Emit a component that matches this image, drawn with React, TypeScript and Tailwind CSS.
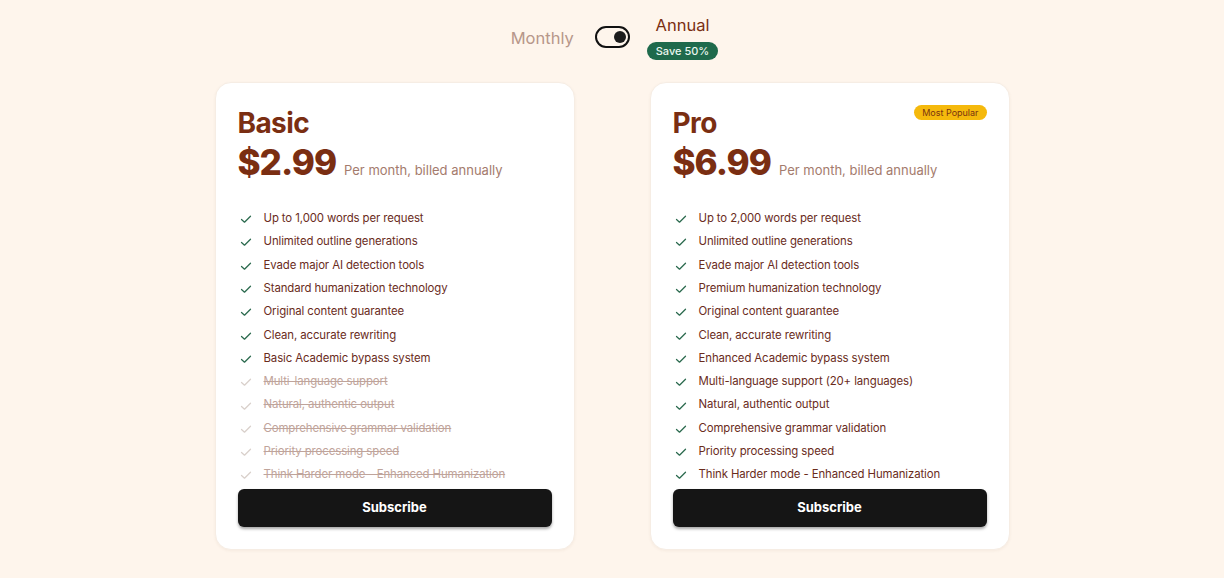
import React from 'react';

type Feature = { text: string; on: boolean };

interface Plan {
  name: string;
  price: string;
  popular?: boolean;
  features: Feature[];
}

const plans: Plan[] = [
  {
    name: 'Basic',
    price: '$2.99',
    features: [
      { text: 'Up to 1,000 words per request', on: true },
      { text: 'Unlimited outline generations', on: true },
      { text: 'Evade major AI detection tools', on: true },
      { text: 'Standard humanization technology', on: true },
      { text: 'Original content guarantee', on: true },
      { text: 'Clean, accurate rewriting', on: true },
      { text: 'Basic Academic bypass system', on: true },
      { text: 'Multi-language support', on: false },
      { text: 'Natural, authentic output', on: false },
      { text: 'Comprehensive grammar validation', on: false },
      { text: 'Priority processing speed', on: false },
      { text: 'Think Harder mode - Enhanced Humanization', on: false },
    ],
  },
  {
    name: 'Pro',
    price: '$6.99',
    popular: true,
    features: [
      { text: 'Up to 2,000 words per request', on: true },
      { text: 'Unlimited outline generations', on: true },
      { text: 'Evade major AI detection tools', on: true },
      { text: 'Premium humanization technology', on: true },
      { text: 'Original content guarantee', on: true },
      { text: 'Clean, accurate rewriting', on: true },
      { text: 'Enhanced Academic bypass system', on: true },
      { text: 'Multi-language support (20+ languages)', on: true },
      { text: 'Natural, authentic output', on: true },
      { text: 'Comprehensive grammar validation', on: true },
      { text: 'Priority processing speed', on: true },
      { text: 'Think Harder mode - Enhanced Humanization', on: true },
    ],
  },
];

const Check = ({ on }: { on: boolean }) => (
  <svg
    width="12"
    height="12"
    viewBox="0 0 12 12"
    fill="none"
    className={on ? 'text-[#2b6a4e] mt-[1px]' : 'text-[#d9d0cb] mt-[1px]'}
  >
    <path d="M1.5 6.5 L4.5 9.2 L10.5 3.2" stroke="currentColor" strokeWidth="1.25" strokeLinecap="round" strokeLinejoin="round" />
  </svg>
);

const PlanCard = ({ plan }: { plan: Plan }) => (
  <div className="relative w-[360px] h-[468px] bg-white rounded-2xl border border-[#f6ede4] shadow-[0_1px_3px_rgba(120,70,40,0.06)] px-[22px] pt-[23px] pb-[22px] flex flex-col">
    {plan.popular && (
      <span className="absolute top-[22px] right-[22px] h-[15px] px-[8px] rounded-full bg-[#f5b90c] text-[#7a3410] text-[9px] leading-[15px]">
        Most Popular
      </span>
    )}
    <h2 className="text-[28px] leading-[34px] font-bold text-[#7a2e12] tracking-[-0.6px]">{plan.name}</h2>
    <div className="flex items-baseline gap-[8px] mt-[2px]">
      <span className="text-[35px] leading-[40px] font-extrabold text-[#7a2e12] tracking-[-1px]">{plan.price}</span>
      <span className="text-[13px] text-[#a47b6d]">Per month, billed annually</span>
    </div>
    <ul className="mt-[25px] flex flex-col">
      {plan.features.map((f) => (
        <li key={f.text} className="flex items-center h-[23.3px] pl-[2px]">
          <Check on={f.on} />
          <span
            className={
              f.on
                ? 'ml-[12px] text-[11.4px] tracking-[-0.1px] text-[#6a2c1c]'
                : 'ml-[12px] text-[11.4px] tracking-[-0.1px] text-[#bfa49b] line-through decoration-[#bfa49b]'
            }
          >
            {f.text}
          </span>
        </li>
      ))}
    </ul>
    <button className="mt-auto h-[38px] w-full rounded-md bg-[#151515] text-white text-[13px] font-bold shadow-[0_2px_3px_rgba(0,0,0,0.35)]">
      Subscribe
    </button>
  </div>
);

export default function App() {
  return (
    <div className="min-h-[578px] w-full bg-[#fef5ec] font-['Inter',sans-serif] flex flex-col items-center pt-[14px]">
      <div className="flex items-center ml-[5px]">
        <span className="text-[16.5px] text-[#b7978a] mr-[21px] mt-[2px]">Monthly</span>
        <div className="w-[35px] h-[22px] rounded-full border-[2.5px] border-[#111] flex items-center justify-end pr-[2px]">
          <span className="w-[12px] h-[12px] rounded-full bg-[#1c1c1c]" />
        </div>
        <div className="flex flex-col items-center ml-[17px]">
          <span className="text-[16.5px] leading-[22px] text-[#7a2e12]">Annual</span>
          <span className="mt-[6px] h-[18px] px-[9px] rounded-full bg-[#1f6a4c] text-[#e9f6ef] text-[11px] leading-[18px] font-medium">
            Save 50%
          </span>
        </div>
      </div>
      <div className="flex gap-[75px] mt-[22px]">
        {plans.map((p) => (
          <PlanCard key={p.name} plan={p} />
        ))}
      </div>
    </div>
  );
}
